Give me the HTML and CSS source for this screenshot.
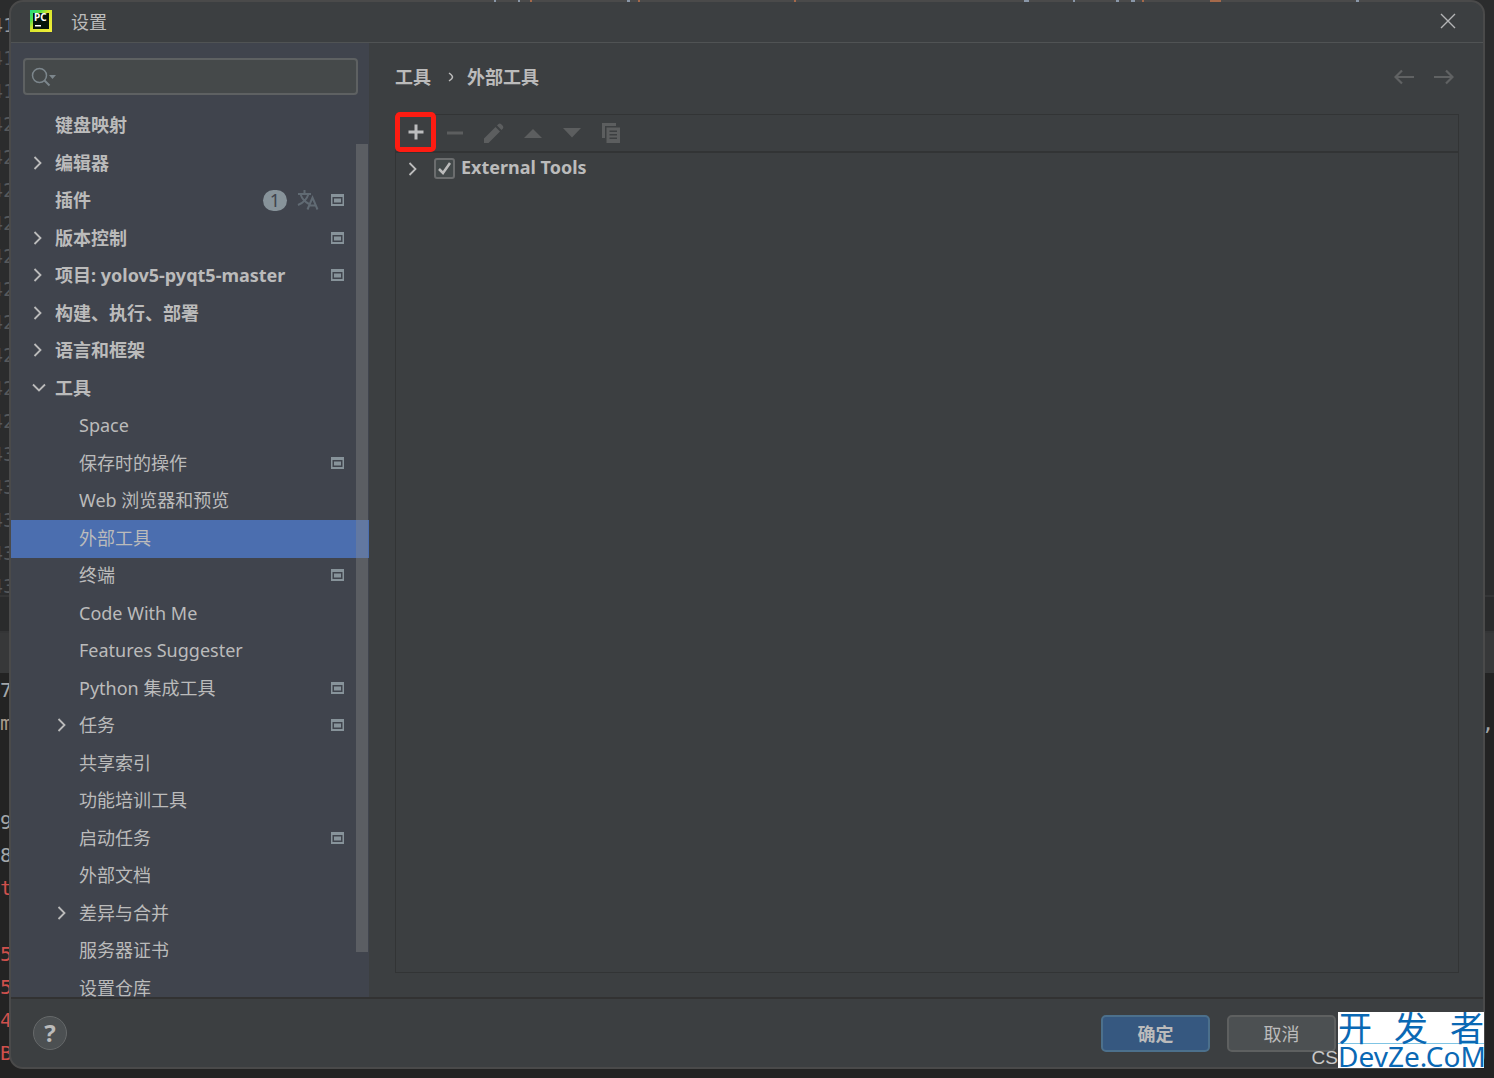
FILE: index.html
```html
<!DOCTYPE html>
<html lang="zh-CN">
<head>
<meta charset="utf-8">
<title>设置</title>
<link rel="stylesheet" href="styles.css">
</head>
<body>
<svg class="defs" aria-hidden="true">
  <symbol id="right" viewBox="0 0 10 16"><path d="M1.500 2 L7.500 8 L1.500 14" fill="none" stroke="currentColor" stroke-width="1.800"/></symbol>
  <symbol id="down" viewBox="0 0 14 10"><path d="M1 1.500 L7 7.500 L13 1.500" fill="none" stroke="currentColor" stroke-width="1.800"/></symbol>
  <symbol id="proj" viewBox="0 0 13 12"><path d="M0 0H13V12H0Z M1.500 3V10H11.500V3Z" fill="#87939a" fill-rule="evenodd"/><path d="M3 4.500H10V8.500H3Z" fill="#87939a"/></symbol>
</svg>

<div class="backdrop" aria-hidden="true">
  <div class="editor">
    <div class="gutter">
      <span class="current">41</span><span>41</span><span>41</span>
      <span>42</span><span>42</span><span>42</span><span>42</span><span>42</span>
      <span>42</span><span>42</span><span>42</span><span>42</span><span>42</span>
      <span>43</span><span>43</span><span>43</span><span>43</span><span>43</span>
    </div>
  </div>
  <div class="status"></div>
  <div class="tabs"></div>
  <div class="console">
    <p>7</p><p class="split"><span class="warm">m</span><span>e,</span></p><p></p><p></p><p>9</p><p>8</p><p class="err">t</p><p></p><p class="err">5</p><p class="err">5</p><p class="err">4</p><p class="err">B</p>
  </div>
</div>

<main class="dialog">
  <header class="titlebar">
    <svg class="logo" width="22" height="22" viewBox="0 0 22 22">
      <defs><linearGradient id="lg" x1="0" y1="0" x2="1" y2="1"><stop offset="0" stop-color="#21d789"/><stop offset=".25" stop-color="#4fe04a"/><stop offset=".45" stop-color="#d8e52c"/><stop offset="1" stop-color="#f2ee3a"/></linearGradient></defs>
      <rect width="22" height="22" fill="url(#lg)"/><rect x="3" y="3" width="16" height="16" fill="#06140a"/>
      <text x="4" y="11" class="logo-text">PC</text><rect x="5" y="15" width="6" height="1.500" fill="#fff"/>
    </svg>
    <h1>设置</h1>
    <button class="close" aria-label="关闭"><svg width="16" height="16" viewBox="0 0 16 16"><path d="M1 1L15 15M15 1L1 15" stroke="#b4b5b6" stroke-width="1.400"/></svg></button>
  </header>

  <div class="content">
    <nav class="sidebar">
      <label class="search">
        <svg width="26" height="20" viewBox="0 0 26 20"><circle cx="8.500" cy="8.500" r="7" fill="none" stroke="#7c868c" stroke-width="1.500"/><path d="M13.500 13.500L18.500 18.500" stroke="#7c868c" stroke-width="2"/><path d="M18 8H25L21.500 12Z" fill="#7c868c"/></svg>
        <input type="text" aria-label="搜索设置">
      </label>
      <div class="scroller">
        <ul class="tree">
          <li><a href="#"><span>键盘映射</span></a></li>
          <li><a href="#"><svg class="arrow"><use href="#right"/></svg><span>编辑器</span></a></li>
          <li><a href="#"><span>插件</span><b class="badge">1</b><svg class="lang" viewBox="0 0 22 20"><path d="M1 4H14M7.500 0V4M3.500 4C5 9 8 12 12 14M11.500 4C10 9 6 13 1 15" fill="none" stroke="currentColor" stroke-width="2"/><path d="M10.500 19.500L15.500 7.500L20.500 19.500M12 15.500H19" fill="none" stroke="currentColor" stroke-width="2"/></svg><svg class="proj"><use href="#proj"/></svg></a></li>
          <li><a href="#"><svg class="arrow"><use href="#right"/></svg><span>版本控制</span><svg class="proj"><use href="#proj"/></svg></a></li>
          <li><a href="#"><svg class="arrow"><use href="#right"/></svg><span>项目: yolov5-pyqt5-master</span><svg class="proj"><use href="#proj"/></svg></a></li>
          <li><a href="#"><svg class="arrow"><use href="#right"/></svg><span>构建、执行、部署</span></a></li>
          <li><a href="#"><svg class="arrow"><use href="#right"/></svg><span>语言和框架</span></a></li>
          <li><a href="#"><svg class="arrow open"><use href="#down"/></svg><span>工具</span></a></li>
          <li class="sub"><a href="#"><span>Space</span></a></li>
          <li class="sub"><a href="#"><span>保存时的操作</span><svg class="proj"><use href="#proj"/></svg></a></li>
          <li class="sub"><a href="#"><span>Web 浏览器和预览</span></a></li>
          <li class="sub selected"><a href="#" aria-current="page"><span>外部工具</span></a></li>
          <li class="sub"><a href="#"><span>终端</span><svg class="proj"><use href="#proj"/></svg></a></li>
          <li class="sub"><a href="#"><span>Code With Me</span></a></li>
          <li class="sub"><a href="#"><span>Features Suggester</span></a></li>
          <li class="sub"><a href="#"><span>Python 集成工具</span><svg class="proj"><use href="#proj"/></svg></a></li>
          <li class="sub"><a href="#"><svg class="arrow"><use href="#right"/></svg><span>任务</span><svg class="proj"><use href="#proj"/></svg></a></li>
          <li class="sub"><a href="#"><span>共享索引</span></a></li>
          <li class="sub"><a href="#"><span>功能培训工具</span></a></li>
          <li class="sub"><a href="#"><span>启动任务</span><svg class="proj"><use href="#proj"/></svg></a></li>
          <li class="sub"><a href="#"><span>外部文档</span></a></li>
          <li class="sub"><a href="#"><svg class="arrow"><use href="#right"/></svg><span>差异与合并</span></a></li>
          <li class="sub"><a href="#"><span>服务器证书</span></a></li>
          <li class="sub"><a href="#"><span>设置仓库</span></a></li>
        </ul>
        <div class="thumb"></div>
      </div>
    </nav>

    <section class="page">
      <div class="crumbs">
        <span>工具</span>
        <svg width="6" height="10" viewBox="0 0 6 10"><path d="M1 1C4 3 4.500 4 4.500 5S4 7 1 9" fill="none" stroke="#bbb" stroke-width="1.500"/></svg>
        <h2>外部工具</h2>
        <div class="history">
          <button aria-label="后退" disabled><svg width="20" height="16" viewBox="0 0 20 16"><path d="M20 8H2M8 1.500L1.500 8L8 14.500" fill="none" stroke="#606263" stroke-width="2.200"/></svg></button>
          <button aria-label="前进" disabled><svg width="20" height="16" viewBox="0 0 20 16"><path d="M0 8H18M12 1.500L18.500 8L12 14.500" fill="none" stroke="#606263" stroke-width="2.200"/></svg></button>
        </div>
      </div>
      <div class="panel">
        <div class="toolbar">
          <button class="add" aria-label="添加"><svg viewBox="0 0 20 20"><path d="M2.500 10H17.500M10 2.500V17.500" stroke="#bcbdbe" stroke-width="3"/></svg></button>
          <button aria-label="移除" disabled><svg viewBox="0 0 20 20"><path d="M2 10H18" stroke="#5c5e5f" stroke-width="3"/></svg></button>
          <button aria-label="编辑" disabled><svg viewBox="0 0 20 20"><path d="M0 15.500L11.500 4L16 8.500L4.500 20H0ZM13 2.500L14.500 1Q16 0 17.500 1.500L18.500 2.500Q20 4 19 5.500L17.500 7Z" fill="#5c5e5f"/></svg></button>
          <button aria-label="上移" disabled><svg viewBox="0 0 20 20"><path d="M1 15H19L10 6Z" fill="#5c5e5f"/></svg></button>
          <button aria-label="下移" disabled><svg viewBox="0 0 20 20"><path d="M1 5H19L10 14.500Z" fill="#5c5e5f"/></svg></button>
          <button aria-label="复制" disabled><svg viewBox="0 0 20 20"><path d="M1 0H15V3H4V15H1Z" fill="#5c5e5f"/><path d="M5.500 4.500H19V20H5.500ZM8.500 7.500V9H16V7.500ZM8.500 11V12.500H16V11ZM8.500 14.500V16H16V14.500Z" fill="#5c5e5f" fill-rule="evenodd"/></svg></button>
        </div>
        <div class="group">
          <svg class="arrow"><use href="#right"/></svg>
          <input type="checkbox" id="ext" checked>
          <label for="ext">External Tools</label>
        </div>
      </div>
    </section>
  </div>

  <footer class="footer">
    <button class="help" aria-label="帮助">?</button>
    <button class="btn primary">确定</button>
    <button class="btn">取消</button>
  </footer>
</main>

<div class="watermark">
  <span class="csdn">CS</span>
  <div class="site"><div class="cn"><span>开</span><span>发</span><span>者</span></div><div class="en">DevZe.CoM</div></div>
</div>
<svg class="code-tips" width="870" height="2" aria-hidden="true">
  <path d="M0 1H2M24 1H26M133 1H136M530 1H535M579 1H581M622 1H625M637 1H641M862 1H865" stroke="#8a97a8" stroke-width="2"/>
  <path d="M36 1H38M144 1H146M300 1H302M648 1H650M716 1H727" stroke="#a5694a" stroke-width="2"/>
</svg>
</body>
</html>
```
FILE: styles.css
```css
* { box-sizing: border-box; }

body {
  margin: 0;
  height: 100vh;
  overflow: hidden;
  background: #232323;
  color: #bbbbbb;
  font: 18px/24px "Noto Sans", "Noto Sans CJK SC", sans-serif;
}

h1, h2, p, ul { margin: 0; padding: 0; font-size: inherit; }
ul { list-style: none; }
a { color: inherit; text-decoration: none; }
svg { display: block; flex: none; }

button {
  padding: 0;
  border: 0;
  background: none;
  color: inherit;
  font: inherit;
}

.defs { display: none; }

/* IDE window behind the dialog */
.backdrop {
  position: absolute;
  inset: 0;
  display: flex;
  flex-direction: column;
  overflow: hidden;
  font: 20px/33px "DejaVu Sans Mono", monospace;
}
.editor {
  height: 597px;
  padding-top: 9px;
  background: #2b2c2d;
  border-bottom: 2px solid #343536;
}
.gutter {
  display: flex;
  flex-direction: column;
  margin-left: -9px;
  color: #56595c;
}
.gutter .current { color: #9a9c9e; }
.status { height: 36px; background: #2a2b2c; border-bottom: 2px solid #343536; }
.tabs { height: 40px; background: #373839; }
.console { padding-top: 1px; color: #a3a7aa; }
.console p { height: 33px; }
.console .split { display: flex; justify-content: space-between; }
.console .warm { color: #a89b8c; }
.console .err { color: #d0504c; }

.code-tips {
  position: absolute;
  top: 0;
  left: 494px;
}

/* Dialog */
.dialog {
  position: relative;
  display: flex;
  flex-direction: column;
  height: calc(100vh - 9px);
  margin: 0 9px;
  border: 2px solid #4a4a4a;
  border-radius: 14px;
  background: #3c3f41;
  overflow: hidden;
}
.titlebar {
  display: flex;
  align-items: center;
  height: 41px;
  padding: 0 27px 2px 19px;
  border-bottom: 1px solid #505354;
}
.titlebar h1 { margin: 2px 0 0 19px; font-weight: 400; }
.logo-text { font: 700 10px "Noto Sans", sans-serif; fill: #fff; }
.close { margin-left: auto; }

.content { display: flex; flex: 1; min-height: 0; }

.sidebar {
  display: flex;
  flex-direction: column;
  width: 358px;
  padding-top: 15px;
  background: #40444d;
}
.search {
  display: flex;
  align-items: center;
  height: 37px;
  margin: 0 11px 0 12px;
  padding: 0 6px;
  border: 2px solid #5e6162;
  border-radius: 4px;
  background: #45494a;
}
.search input {
  flex: 1;
  min-width: 0;
  border: 0;
  outline: 0;
  background: none;
  color: inherit;
  font: inherit;
}
.scroller {
  position: relative;
  flex: 1;
  min-height: 0;
  margin-top: 13px;
  overflow: hidden;
}
.thumb {
  position: absolute;
  top: 36px;
  right: 1px;
  bottom: 45px;
  width: 12px;
  background: rgba(139, 139, 139, 0.37);
}
.tree li { height: 38px; font-weight: 700; }
.tree li:nth-child(odd) { height: 37px; }
.tree .sub { font-weight: 400; }
.tree a {
  display: flex;
  align-items: center;
  height: 100%;
  padding: 0 25px 3px 44px;
}
.tree .sub a { padding-left: 68px; }
.tree .selected { background: #4b6eaf; }
.tree a > span { margin-right: auto; }

.arrow { width: 10px; height: 16px; margin: 0 12px 0 -22px; color: #bbbbbb; }
.arrow.open { width: 14px; height: 10px; margin: 0 9px 0 -23px; }
.proj { width: 13px; height: 12px; }
.lang { width: 22px; height: 20px; margin: 0 12px 0 10px; color: #606a73; }
.badge {
  width: 24px;
  height: 21px;
  border-radius: 11px;
  background: #87939a;
  color: #40444d;
  font-weight: 400;
  line-height: 21px;
  text-align: center;
}

.page {
  display: flex;
  flex: 1;
  flex-direction: column;
  min-width: 0;
  padding: 22px 24px 24px 26px;
}
.crumbs {
  display: flex;
  align-items: center;
  margin-bottom: 25px;
  font-weight: 700;
}
.crumbs > svg { margin: 0 13px 0 17px; }
.history { display: flex; gap: 20px; margin: 0 5px 0 auto; }

.panel { flex: 1; border: 1px solid #323435; }
.toolbar {
  display: flex;
  align-items: center;
  gap: 19px;
  height: 38px;
  border-bottom: 2px solid #323435;
}
.toolbar svg { width: 20px; height: 20px; }
.toolbar .add {
  display: grid;
  place-items: center;
  width: 41px;
  height: 40px;
  margin: -2px -10px 0 -1px;
  border: 5px solid #fe1c12;
  border-radius: 5px;
}
.group {
  display: flex;
  align-items: center;
  height: 31px;
  padding-left: 34px;
  font-weight: 700;
}
.group label { padding-bottom: 3px; }
.group input {
  width: 21px;
  height: 21px;
  margin: 0 6px 0 4px;
  appearance: none;
  border: 2px solid #6b6d6e;
  border-radius: 3px;
  background: #43494a url("data:image/svg+xml,%3Csvg xmlns='http://www.w3.org/2000/svg' viewBox='0 0 17 17'%3E%3Cpath d='M3 9L7 13L14 3' fill='none' stroke='%23bbb' stroke-width='2.5'/%3E%3C/svg%3E") center / 17px 17px no-repeat;
}
.group .arrow { margin-left: -22px; }

.footer {
  display: flex;
  align-items: center;
  gap: 17px;
  height: 70px;
  padding: 0 147px 0 22px;
  border-top: 2px solid #323232;
}
.help {
  width: 34px;
  height: 34px;
  margin-right: auto;
  border: 1px solid #66696a;
  border-radius: 50%;
  background: #4c5052;
  font-size: 24px;
  font-weight: 700;
}
.btn {
  width: 109px;
  height: 37px;
  padding-top: 2px;
  border: 2px solid #5e6060;
  border-radius: 5px;
  background: #4c5052;
}
.btn.primary {
  border-color: #4c708c;
  background: #365880;
  font-weight: 700;
}

/* Site mark over the corner */
.watermark {
  position: absolute;
  right: 10px;
  bottom: 10px;
  display: flex;
  align-items: flex-end;
}
.csdn {
  color: #c8c8c8;
  font: 19px/20px "Liberation Sans", sans-serif;
}
.site {
  width: 146px;
  height: 56px;
  background: #ffffff;
  color: #0a68b4;
}
.cn {
  display: flex;
  justify-content: space-between;
  height: 32px;
  border-bottom: 1px solid #7fc4e4;
  font: 34px/30px "Noto Sans CJK SC", sans-serif;
}
.en { font-size: 28px; line-height: 24px; text-align: center; white-space: nowrap; }
```
